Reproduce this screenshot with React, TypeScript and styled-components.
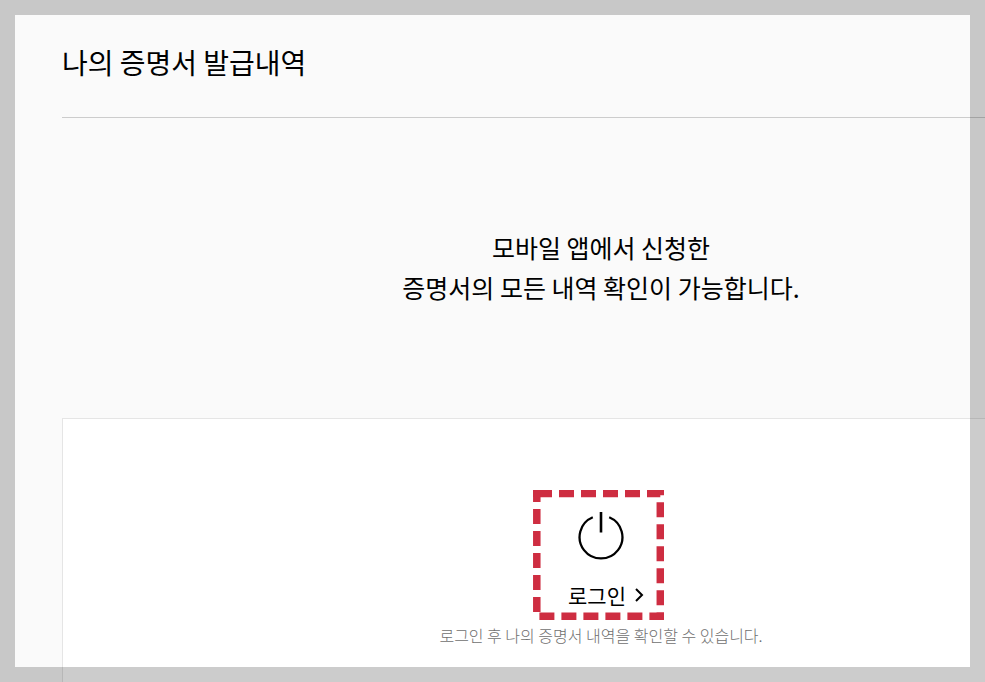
import React from "react";
import styled, { createGlobalStyle } from "styled-components";

const GlobalStyle = createGlobalStyle`
  *, *::before, *::after { box-sizing: border-box; }
  body {
    margin: 0;
    background: #fafafa;
    color: #000;
    font-family: "Noto Sans CJK KR", "Noto Sans", sans-serif;
  }
`;

const Page = styled.div`
  position: relative;
  display: flex;
  flex-direction: column;
  min-height: 100vh;
  overflow: hidden;
`;

const Shade = styled.div`
  position: absolute;
  inset: 0;
  border: 15px solid rgba(0, 0, 0, 0.2);
  pointer-events: none;
`;

const Content = styled.main`
  flex: 1;
  display: flex;
  flex-direction: column;
  margin: 0 -155px 0 62px;
`;

const Title = styled.h1`
  margin: 0;
  padding: 42px 0 35px;
  border-bottom: 1px solid #ccc;
  font-size: 28px;
  line-height: 40px;
  font-weight: 400;
`;

const Message = styled.p`
  margin: 0;
  padding: 109px 0 111px;
  font-size: 25px;
  line-height: 40px;
  text-align: center;
`;

const Card = styled.section`
  flex: 1;
  display: flex;
  flex-direction: column;
  align-items: center;
  padding: 71px 0 20px;
  border: 1px solid #e5e5e5;
  border-bottom: 0;
  background: #fff;
`;

const LoginButton = styled.button`
  position: relative;
  display: flex;
  flex-direction: column;
  align-items: center;
  gap: 20px;
  width: 137px;
  padding: 20px 0 10px;
  border: 0;
  background: none;
  color: inherit;
  font: inherit;
  cursor: pointer;
`;

const Highlight = styled.svg`
  position: absolute;
  top: 0;
  left: 0;
`;

const LoginLabel = styled.span`
  display: flex;
  align-items: center;
  gap: 9px;
  padding-left: 10px;
  font-size: 21px;
  line-height: 30px;
`;

const Hint = styled.p`
  margin: 0;
  color: #707070;
  font-size: 16px;
  line-height: 30px;
  font-weight: 300;
`;

export default function App() {
  return (
    <Page>
      <GlobalStyle />
      <Content>
        <Title>나의 증명서 발급내역</Title>
        <Message>
          모바일 앱에서 신청한
          <br />
          증명서의 모든 내역 확인이 가능합니다.
        </Message>
        <Card>
          <LoginButton type="button">
            <Highlight width="131" height="130" fill="none" aria-hidden="true">
              <path
                d="M4 3.5H127.3V126.3H3.8V0"
                stroke="#ce2d41"
                strokeWidth="7.5"
                strokeDasharray="15 7"
              />
              <path d="M0 3.5H18" stroke="#ce2d41" strokeWidth="7" />
            </Highlight>
            <svg width="46" height="50" viewBox="0 0 46 50" fill="none" stroke="#000" aria-hidden="true">
              <path d="M14.8 7.3A21.4 21.4 0 1 0 31.2 7.3" strokeWidth="2.3" />
              <path d="M23 2V22.5" strokeWidth="2.6" />
            </svg>
            <LoginLabel>
              로그인
              <svg width="9" height="14" viewBox="0 0 9 14" fill="none" stroke="#000" aria-hidden="true">
                <path d="M1 1L7 7L1 13" strokeWidth="2" />
              </svg>
            </LoginLabel>
          </LoginButton>
          <Hint>로그인 후 나의 증명서 내역을 확인할 수 있습니다.</Hint>
        </Card>
      </Content>
      <Shade />
    </Page>
  );
}
